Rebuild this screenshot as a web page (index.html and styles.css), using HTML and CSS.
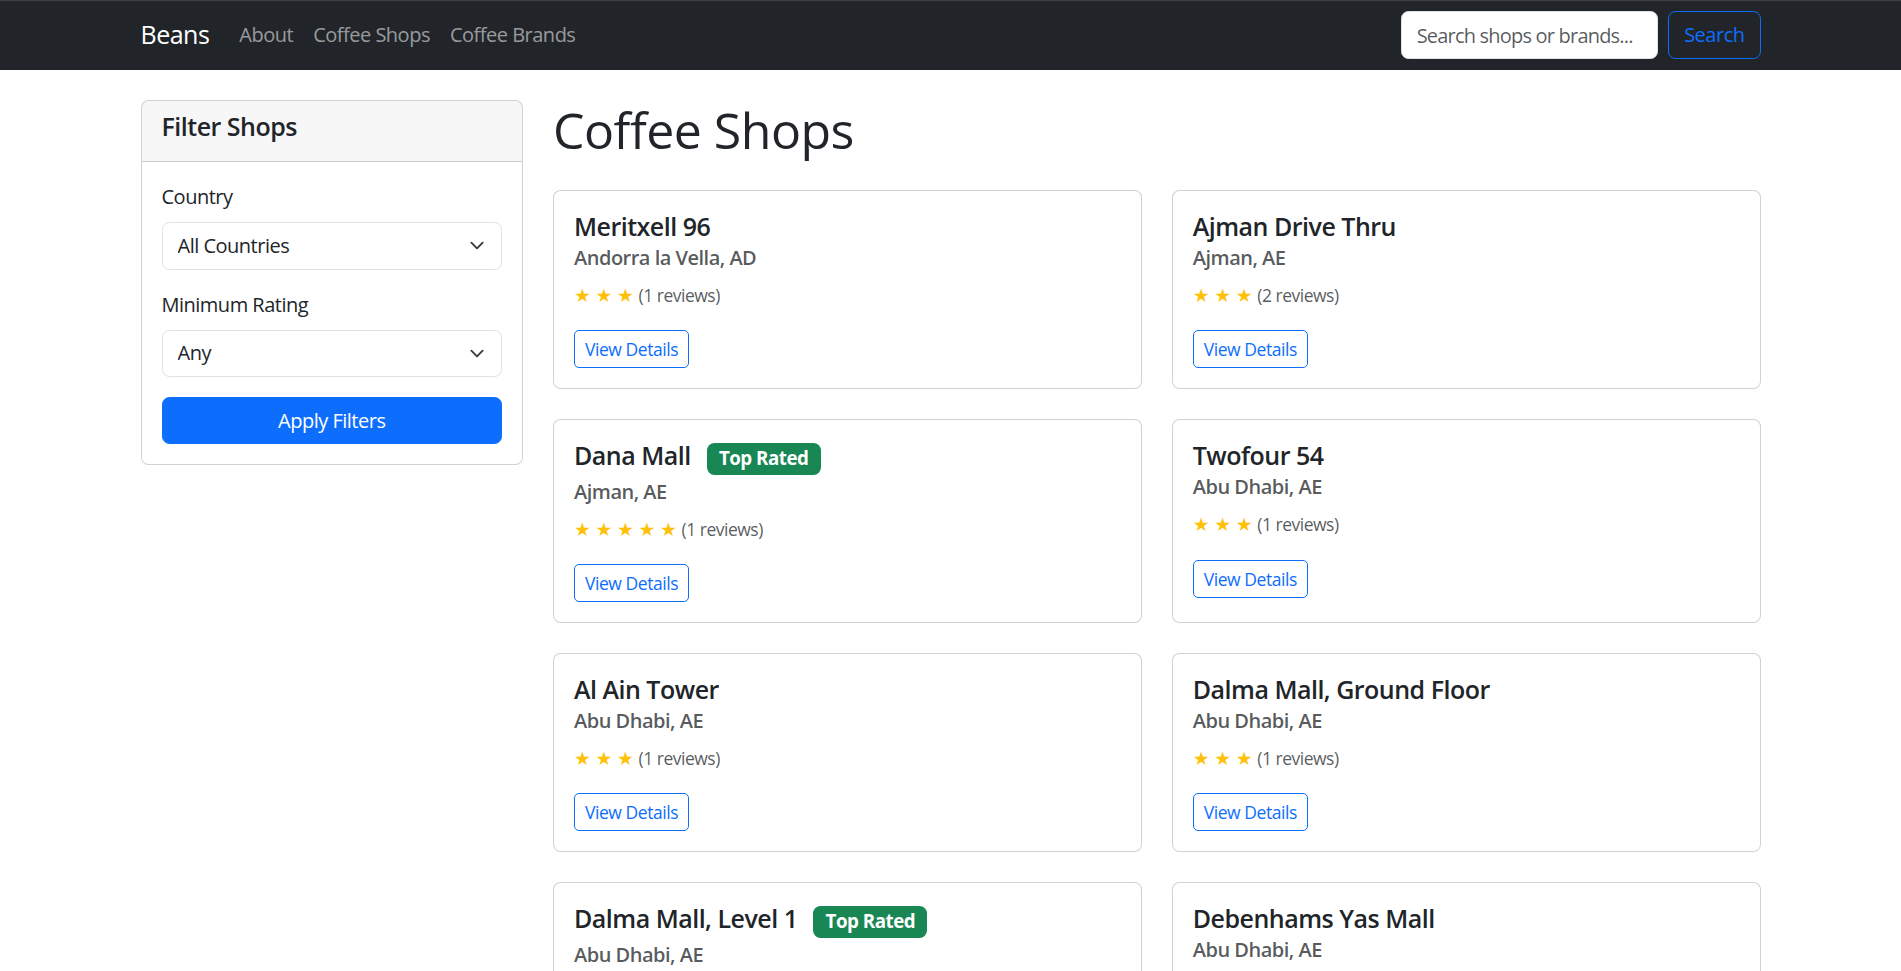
FILE: index.html
```html
<!DOCTYPE html>
<html lang="en">
<head>
<meta charset="utf-8">
<title>Coffee Shops - Beans</title>
<link rel="stylesheet" href="styles.css">
</head>
<body>
<nav class="navbar">
  <div class="container nav-inner">
    <a class="brand" href="#">Beans</a>
    <ul class="nav-links">
      <li><a class="nav-link" href="#">About</a></li>
      <li><a class="nav-link" href="#">Coffee Shops</a></li>
      <li><a class="nav-link" href="#">Coffee Brands</a></li>
    </ul>
    <form class="search-form">
      <input class="form-control search-input" type="search" placeholder="Search shops or brands...">
      <button class="btn btn-outline-primary" type="button">Search</button>
    </form>
  </div>
</nav>

<main class="container page">
  <div class="layout">
    <aside class="card filter-card">
      <div class="card-header"><h5 class="header-title">Filter Shops</h5></div>
      <div class="card-body">
        <div class="field">
          <label class="form-label">Country</label>
          <div class="select-wrap">
            <select class="form-select"><option>All Countries</option></select>
            <svg class="chevron" viewBox="0 0 16 16" width="16" height="12"><path d="M2 5l6 6 6-6" fill="none" stroke="#343a40" stroke-width="2" stroke-linecap="round" stroke-linejoin="round"/></svg>
          </div>
        </div>
        <div class="field">
          <label class="form-label">Minimum Rating</label>
          <div class="select-wrap">
            <select class="form-select"><option>Any</option></select>
            <svg class="chevron" viewBox="0 0 16 16" width="16" height="12"><path d="M2 5l6 6 6-6" fill="none" stroke="#343a40" stroke-width="2" stroke-linecap="round" stroke-linejoin="round"/></svg>
          </div>
        </div>
        <button class="btn btn-primary btn-block" type="button">Apply Filters</button>
      </div>
    </aside>

    <section class="content">
      <h1 class="page-title">Coffee Shops</h1>
      <div class="shop-grid">
        <div class="card shop-card">
          <h5 class="card-title">Meritxell 96</h5>
          <h6 class="card-subtitle">Andorra la Vella, AD</h6>
          <p class="rating"><span class="stars">★ ★ ★</span> <small class="muted">(1 reviews)</small></p>
          <a class="btn btn-sm btn-outline-primary" href="#">View Details</a>
        </div>
        <div class="card shop-card">
          <h5 class="card-title">Ajman Drive Thru</h5>
          <h6 class="card-subtitle">Ajman, AE</h6>
          <p class="rating"><span class="stars">★ ★ ★</span> <small class="muted">(2 reviews)</small></p>
          <a class="btn btn-sm btn-outline-primary" href="#">View Details</a>
        </div>
        <div class="card shop-card">
          <h5 class="card-title">Dana Mall <span class="badge">Top Rated</span></h5>
          <h6 class="card-subtitle">Ajman, AE</h6>
          <p class="rating"><span class="stars">★ ★ ★ ★ ★</span> <small class="muted">(1 reviews)</small></p>
          <a class="btn btn-sm btn-outline-primary" href="#">View Details</a>
        </div>
        <div class="card shop-card">
          <h5 class="card-title">Twofour 54</h5>
          <h6 class="card-subtitle">Abu Dhabi, AE</h6>
          <p class="rating"><span class="stars">★ ★ ★</span> <small class="muted">(1 reviews)</small></p>
          <a class="btn btn-sm btn-outline-primary" href="#">View Details</a>
        </div>
        <div class="card shop-card">
          <h5 class="card-title">Al Ain Tower</h5>
          <h6 class="card-subtitle">Abu Dhabi, AE</h6>
          <p class="rating"><span class="stars">★ ★ ★</span> <small class="muted">(1 reviews)</small></p>
          <a class="btn btn-sm btn-outline-primary" href="#">View Details</a>
        </div>
        <div class="card shop-card">
          <h5 class="card-title">Dalma Mall, Ground Floor</h5>
          <h6 class="card-subtitle">Abu Dhabi, AE</h6>
          <p class="rating"><span class="stars">★ ★ ★</span> <small class="muted">(1 reviews)</small></p>
          <a class="btn btn-sm btn-outline-primary" href="#">View Details</a>
        </div>
        <div class="card shop-card">
          <h5 class="card-title">Dalma Mall, Level 1 <span class="badge">Top Rated</span></h5>
          <h6 class="card-subtitle">Abu Dhabi, AE</h6>
          <p class="rating"><span class="stars">★ ★ ★ ★ ★</span> <small class="muted">(1 reviews)</small></p>
          <a class="btn btn-sm btn-outline-primary" href="#">View Details</a>
        </div>
        <div class="card shop-card">
          <h5 class="card-title">Debenhams Yas Mall</h5>
          <h6 class="card-subtitle">Abu Dhabi, AE</h6>
          <p class="rating"><span class="stars">★ ★ ★</span> <small class="muted">(1 reviews)</small></p>
          <a class="btn btn-sm btn-outline-primary" href="#">View Details</a>
        </div>
      </div>
    </section>
  </div>
</main>
</body>
</html>
```

FILE: styles.css
```css
html {
  zoom: 1.25;
  scrollbar-width: none;
}
html::-webkit-scrollbar { display: none; }

* { box-sizing: border-box; }

body {
  margin: 0;
  font-family: "Open Sans", "Noto Sans", "Liberation Sans", sans-serif;
  font-size: 16px;
  line-height: 1.5;
  letter-spacing: -0.025em;
  color: #212529;
  background: #fff;
}

a { text-decoration: none; }

.container {
  max-width: 1320px;
  margin: 0 auto;
  padding: 0 12px;
}

/* Navbar */
.navbar {
  background: #212529;
  padding: 8px 0;
  box-shadow: inset 0 1px 0 #3a3d42;
}
.nav-inner {
  display: flex;
  align-items: center;
}
.brand {
  color: #fff;
  font-size: 20px;
  padding: 5px 0;
  margin-right: 16px;
  line-height: 1.5;
}
.nav-links {
  display: flex;
  list-style: none;
  margin: 0;
  padding: 0;
}
.nav-link {
  display: block;
  padding: 8px;
  color: rgba(255, 255, 255, 0.55);
  font-size: 16px;
}
.search-form {
  margin-left: auto;
  display: flex;
  gap: 8px;
}
.form-control {
  display: block;
  font-family: inherit;
  font-size: 16px;
  line-height: 1.5;
  letter-spacing: -0.025em;
  padding: 6px 12px;
  color: #212529;
  background: #fff;
  border: 1px solid #dee2e6;
  border-radius: 6px;
  height: 38px;
}
.form-control::placeholder { color: rgba(33, 37, 41, 0.75); }
.search-input { width: 206px; padding-right: 4px; letter-spacing: -0.04em; }

/* Buttons */
.btn {
  display: inline-block;
  font-family: inherit;
  font-size: 16px;
  line-height: 1.5;
  letter-spacing: -0.025em;
  padding: 6px 12px;
  border: 1px solid transparent;
  border-radius: 6px;
  background: transparent;
  text-align: center;
  cursor: pointer;
}
.btn-outline-primary {
  color: #0d6efd;
  border-color: #0d6efd;
}
.btn-primary {
  color: #fff;
  background: #0d6efd;
  border-color: #0d6efd;
}
.btn-block { display: block; width: 100%; }
.btn-sm {
  font-size: 14px;
  padding: 4px 8px;
  border-radius: 4px;
}

/* Layout */
.page { margin-top: 24px; }
.layout {
  display: grid;
  grid-template-columns: 306px 1fr;
  column-gap: 24px;
  align-items: start;
}

/* Cards */
.card {
  background: #fff;
  border: 1px solid rgba(0, 0, 0, 0.175);
  border-radius: 6px;
}
.card-header {
  padding: 8px 16px;
  background: rgba(0, 0, 0, 0.03);
  border-bottom: 1px solid rgba(0, 0, 0, 0.175);
  border-radius: 5px 5px 0 0;
}
.header-title {
  margin: 0 0 8px;
  font-size: 20px;
  font-weight: 600;
  line-height: 1.2;
}
.card-body { padding: 16px; }
.field { margin-bottom: 16px; }
.form-label {
  display: inline-block;
  margin-bottom: 8px;
}
.select-wrap { position: relative; }
.form-select {
  display: block;
  width: 100%;
  height: 38px;
  appearance: none;
  -webkit-appearance: none;
  font-family: inherit;
  font-size: 16px;
  line-height: 1.5;
  letter-spacing: -0.025em;
  color: #212529;
  background: #fff;
  padding: 6px 36px 6px 12px;
  border: 1px solid #dee2e6;
  border-radius: 6px;
}
.chevron {
  position: absolute;
  right: 12px;
  top: 13px;
  pointer-events: none;
}

/* Content */
.page-title {
  margin: 0 0 24px;
  font-size: 40px;
  font-weight: 500;
  line-height: 1.2;
}
.shop-grid {
  display: grid;
  grid-template-columns: 1fr 1fr;
  gap: 24px;
}
.shop-card {
  padding: 16px;
}
.card-title {
  margin: 0 0 8px;
  font-size: 20px;
  font-weight: 600;
  line-height: 1.2;
}
.card-subtitle {
  margin: -4px 0 8px;
  font-size: 16px;
  font-weight: 600;
  line-height: 1.2;
  color: rgba(33, 37, 41, 0.75);
}
.rating {
  margin: 0 0 16px;
}
.stars {
  color: #ffc107;
  font-family: "DejaVu Sans", sans-serif;
  font-size: 15px;
  letter-spacing: 0;
  word-spacing: -1px;
}
.muted {
  font-size: 14px;
  color: rgba(33, 37, 41, 0.75);
}
.badge {
  display: inline-block;
  margin-left: 8px;
  padding: 0.35em 0.65em;
  font-size: 0.75em;
  font-weight: 700;
  line-height: 1;
  color: #fff;
  background: #198754;
  border-radius: 6px;
  vertical-align: baseline;
}
```
